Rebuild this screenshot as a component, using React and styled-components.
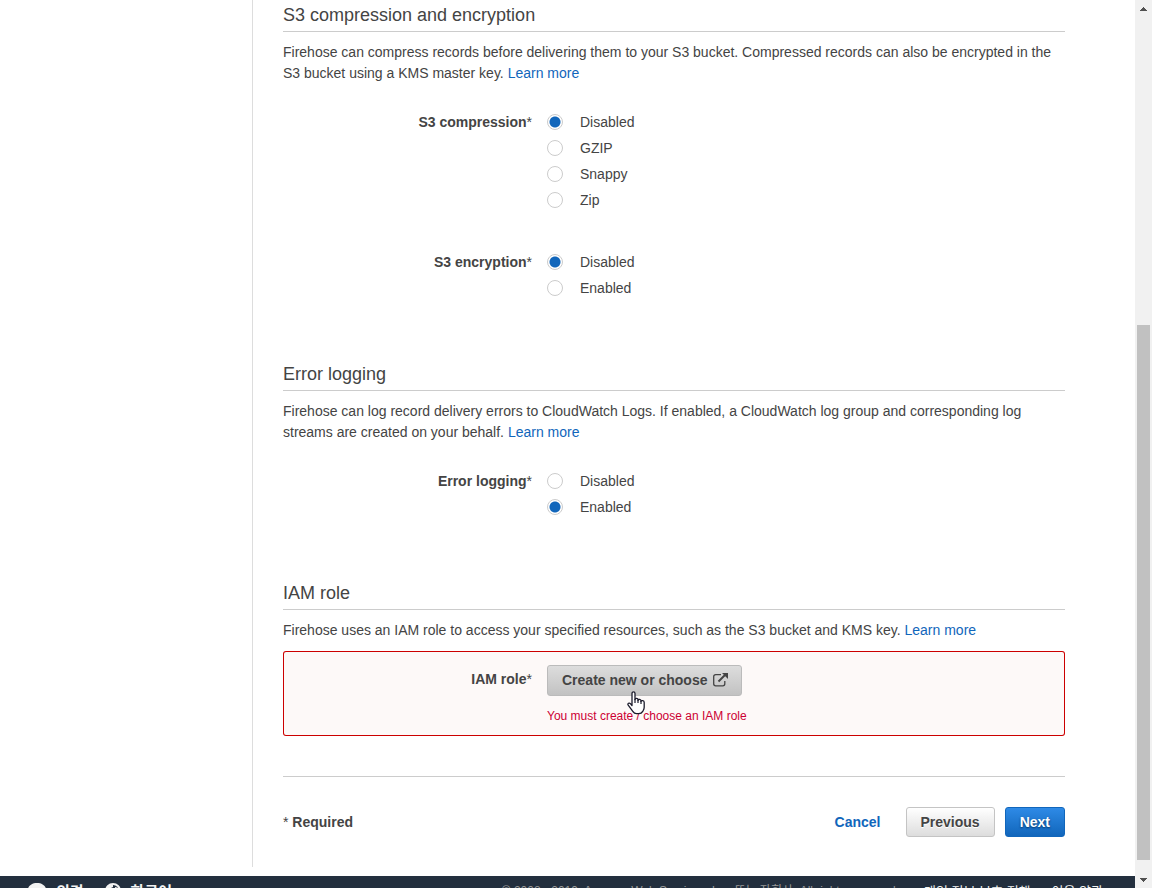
import React from "react";
import styled, { createGlobalStyle } from "styled-components";

export default function App() {
    const [compression, setCompression] = React.useState("Disabled");
    const [encryption, setEncryption] = React.useState("Disabled");
    const [logging, setLogging] = React.useState("Enabled");

    return (
        <Screen>
            <GlobalStyle />
            <Page>
                <Body>
                    <Sidebar />
                    <Content>
                        <Section>
                            <Title>S3 compression and encryption</Title>
                            <Text>
                                Firehose can compress records before delivering them to your S3 bucket. Compressed records can also be encrypted in the S3 bucket using a KMS master key. <Link href="#compression">Learn more</Link>
                            </Text>
                            <Groups>
                                <RadioGroup label="S3 compression" name="compression" options={["Disabled", "GZIP", "Snappy", "Zip"]} value={compression} onChange={setCompression} />
                                <RadioGroup label="S3 encryption" name="encryption" options={["Disabled", "Enabled"]} value={encryption} onChange={setEncryption} />
                            </Groups>
                        </Section>
                        <Section>
                            <Title>Error logging</Title>
                            <Text>
                                Firehose can log record delivery errors to CloudWatch Logs. If enabled, a CloudWatch log group and corresponding log streams are created on your behalf. <Link href="#logging">Learn more</Link>
                            </Text>
                            <Groups>
                                <RadioGroup label="Error logging" name="logging" options={["Disabled", "Enabled"]} value={logging} onChange={setLogging} />
                            </Groups>
                        </Section>
                        <Section>
                            <Title>IAM role</Title>
                            <Text>
                                Firehose uses an IAM role to access your specified resources, such as the S3 bucket and KMS key. <Link href="#role">Learn more</Link>
                            </Text>
                            <ErrorBox>
                                <RoleLabel as="label" htmlFor="role">IAM role<Star>*</Star></RoleLabel>
                                <div>
                                    <RoleButton id="role" type="button">
                                        Create new or choose
                                        <ExternalIcon />
                                        <HandCursor />
                                    </RoleButton>
                                    <ErrorText>You must create / choose an IAM role</ErrorText>
                                </div>
                            </ErrorBox>
                        </Section>
                        <Actions>
                            <Required><Star>*</Star> Required</Required>
                            <Cancel href="#cancel">Cancel</Cancel>
                            <Button type="button">Previous</Button>
                            <Button type="button" $primary>Next</Button>
                        </Actions>
                    </Content>
                </Body>
                <Footer>
                    <FooterLink href="#feedback" $bold><BubbleIcon />의견</FooterLink>
                    <FooterLink href="#language" $bold><GlobeIcon />한국어</FooterLink>
                    <Copyright>© 2008 - 2019, Amazon Web Services, Inc. 또는 자회사. All rights reserved.</Copyright>
                    <FooterLink href="#privacy">개인 정보 보호 정책</FooterLink>
                    <FooterLink href="#terms">이용 약관</FooterLink>
                </Footer>
            </Page>
            <Scrollbar aria-hidden="true">
                <ArrowBox><svg width="7" height="4" viewBox="0 0 7 4"><path d="M3 0h1v1h1v1h1v1h1v1H0V3h1V2h1V1h1z" fill="#505050" /></svg></ArrowBox>
                <Track><Thumb /></Track>
                <ArrowBox><svg width="7" height="4" viewBox="0 0 7 4"><path d="M0 0h7v1H6v1H5v1H4v1H3V3H2V2H1V1H0z" fill="#505050" /></svg></ArrowBox>
            </Scrollbar>
        </Screen>
    );
}

function RadioGroup({ label, name, options, value, onChange }) {
    return (
        <Row role="radiogroup" aria-labelledby={name + "-label"}>
            <Label id={name + "-label"}>{label}<Star>*</Star></Label>
            <div>
                {options.map(option => (
                    <Option key={option}>
                        <Radio type="radio" name={name} checked={value === option} onChange={() => onChange(option)} />
                        {option}
                    </Option>
                ))}
            </div>
        </Row>
    );
}

function ExternalIcon() {
    return (
        <svg width="15" height="14" viewBox="0 0 15 14" fill="none" stroke="#444" aria-hidden="true">
            <path d="M8 1.700H2.700Q.7 1.700.7 3.700v7.100q0 2 2 2h7.100q2 0 2-2V8" strokeWidth="1.300" />
            <path d="M5.500 8.500 12.500 1.500" strokeWidth="2" />
            <path d="M9 0h6v6z" fill="#444" stroke="none" />
        </svg>
    );
}

function HandCursor() {
    return (
        <Cursor width="19" height="24" viewBox="0 0 19 24" aria-hidden="true">
            <path
                d="M5 2.500C5 .3 8 .3 8 2.500v6c.2-1.700 3-1.600 3 .3v.5c.3-1.400 3-1.200 3 .5v.6c.4-1.200 3.200-1 3.200 1v4.800c0 2.200-1 3.200-1.500 4.200-.8 1.600-2.100 2.300-4 2.300H9.500c-1.700 0-2.800-.9-3.700-2.300L1.200 14.200c-1-1.700 1-2.800 2.200-1.600L5 14.500z"
                fill="#fff" stroke="#1b1b2b" strokeWidth="1.300" strokeLinejoin="round"
            />
            <path d="M8 8v4M11 9v3M14 10v3" stroke="#1b1b2b" strokeWidth="1.200" />
        </Cursor>
    );
}

function BubbleIcon() {
    return (
        <svg width="18" height="16" viewBox="0 0 18 16" fill="#f2f2f2" aria-hidden="true">
            <path d="M9 0c5 0 9 2.800 9 6.500S14 13 9 13c-1 0-2 0-2.800-.3C4.700 14 3 15 1 15.200c1-1 1.500-2 1.700-3.500C1 10.500 0 8.500 0 6.500 0 2.800 4 0 9 0z" />
        </svg>
    );
}

function GlobeIcon() {
    return (
        <svg width="16" height="16" viewBox="0 0 16 16" aria-hidden="true">
            <circle cx="8" cy="8" r="7" fill="none" stroke="#f2f2f2" strokeWidth="2" />
            <path d="M2 4 6 1 8 2 8 4 6 5 7 7 4 8 2 7zM10 4l4 1 1 5-3 3-2-4z" fill="#f2f2f2" />
        </svg>
    );
}


const GlobalStyle = createGlobalStyle`
    *{
        box-sizing: border-box;
    }
    body{
        margin: 0;
        background-color: #fff;
        color: #444;
        font-family: "Liberation Sans", Arial, "Noto Sans CJK KR", sans-serif;
        font-size: 14px;
        line-height: 21px;
    }
`

const Screen = styled.div`
    display: flex;
    height: 100vh;
    overflow: hidden;
`

const Page = styled.div`
    flex: 1;
    min-width: 0;
    overflow: hidden;
`

const Body = styled.main`
    display: flex;
    margin-bottom: 9px;
`

const Sidebar = styled.div`
    flex: none;
    width: 253px;
    border-right: 1px solid #ddd;
`

const Content = styled.div`
    flex: 1;
    min-width: 0;
    padding: 0 70px 30px 30px;
`

const Section = styled.section`
    & + &{
        margin-top: 58px;
    }
`

const Title = styled.h2`
    margin: 0 0 10px;
    padding: 5px 0;
    border-bottom: 1px solid #ccc;
    font-size: 18px;
    font-weight: 400;
    line-height: 21px;
`

const Text = styled.p`
    margin: 0;
`

const Link = styled.a`
    color: #1166bb;
    text-decoration: none;
`

const Groups = styled.div`
    display: flex;
    flex-direction: column;
    gap: 36px;
    margin-top: 25px;
`

const Row = styled.div`
    display: grid;
    grid-template-columns: 249px 1fr;
    column-gap: 15px;
`

const Label = styled.span`
    font-weight: 700;
    line-height: 26px;
    text-align: right;
`

const RoleLabel = styled(Label)`
    line-height: 28px;
`

const Star = styled.span`
    font-weight: 400;
`

const Option = styled.label`
    display: flex;
    align-items: center;
    gap: 17px;
    height: 26px;
`

const Radio = styled.input`
    appearance: none;
    width: 16px;
    height: 16px;
    margin: 0;
    border: 1px solid #ccc;
    border-radius: 50%;
    background-color: #fff;

    &:checked{
        background-image: radial-gradient(circle, #1166bb 5px, #fff 6px);
    }
`

const ErrorBox = styled(Row)`
    margin-top: 10px;
    padding: 14px 0 9px;
    border-radius: 3px;
    background-color: #fdf9f8;
    box-shadow: inset 0 0 0 1px #c00;
`

const Button = styled.button`
    height: 30px;
    padding: 0 14px;
    border: 1px solid ${props => props.$primary ? '#1166bb' : '#c4c4c4'};
    border-radius: 3px;
    background: ${props => props.$primary ? 'linear-gradient(#2e8ae6, #1166bb)' : 'linear-gradient(#fff, #ddd)'};
    color: ${props => props.$primary ? '#fff' : '#444'};
    font-family: inherit;
    font-size: 14px;
    font-weight: 700;
    text-shadow: ${props => props.$primary ? '0 1px 2px #003366' : '0 1px 0 #fff'};
`

const RoleButton = styled(Button)`
    position: relative;
    display: flex;
    align-items: center;
    gap: 5px;
    height: 31px;
    padding: 0 13px 2px 14px;
    border-color: #bbb;
    background: linear-gradient(#ddd, #c2c2c2);
    text-shadow: none;
`

const Cursor = styled.svg`
    position: absolute;
    top: 25px;
    left: 79px;
    z-index: 1;
`

const ErrorText = styled.p`
    margin: 10px 0 0;
    color: #c03;
    font-size: 12px;
`

const Actions = styled.div`
    display: flex;
    align-items: center;
    gap: 10px;
    margin-top: 40px;
    padding-top: 30px;
    border-top: 1px solid #ccc;
`

const Required = styled.div`
    flex: 1;
    font-weight: 700;
`

const Cancel = styled(Link)`
    margin-right: 15px;
    font-weight: 700;
`

const Footer = styled.footer`
    display: flex;
    align-items: center;
    gap: 21px;
    height: 30px;
    padding: 0 32px 0 28px;
    background-color: #232f3e;
    color: #999;
    font-size: 12px;
`

const FooterLink = styled.a`
    display: flex;
    align-items: center;
    gap: 10px;
    color: #f2f2f2;
    font-size: ${props => props.$bold ? '15px' : '13px'};
    font-weight: ${props => props.$bold ? 700 : 400};
    text-decoration: none;
    white-space: nowrap;
`

const Copyright = styled.span`
    flex: 1;
    padding-right: 4px;
    text-align: right;
`

const Scrollbar = styled.div`
    display: flex;
    flex: none;
    flex-direction: column;
    width: 17px;
    background-color: #f1f1f1;
`

const ArrowBox = styled.div`
    display: flex;
    align-items: center;
    justify-content: center;
    height: 17px;
`

const Track = styled.div`
    display: grid;
    flex: 1;
    grid-template-rows: 308fr 535fr 11fr;
    padding: 0 2px;
`

const Thumb = styled.div`
    grid-row: 2;
    background-color: #c1c1c1;
`
